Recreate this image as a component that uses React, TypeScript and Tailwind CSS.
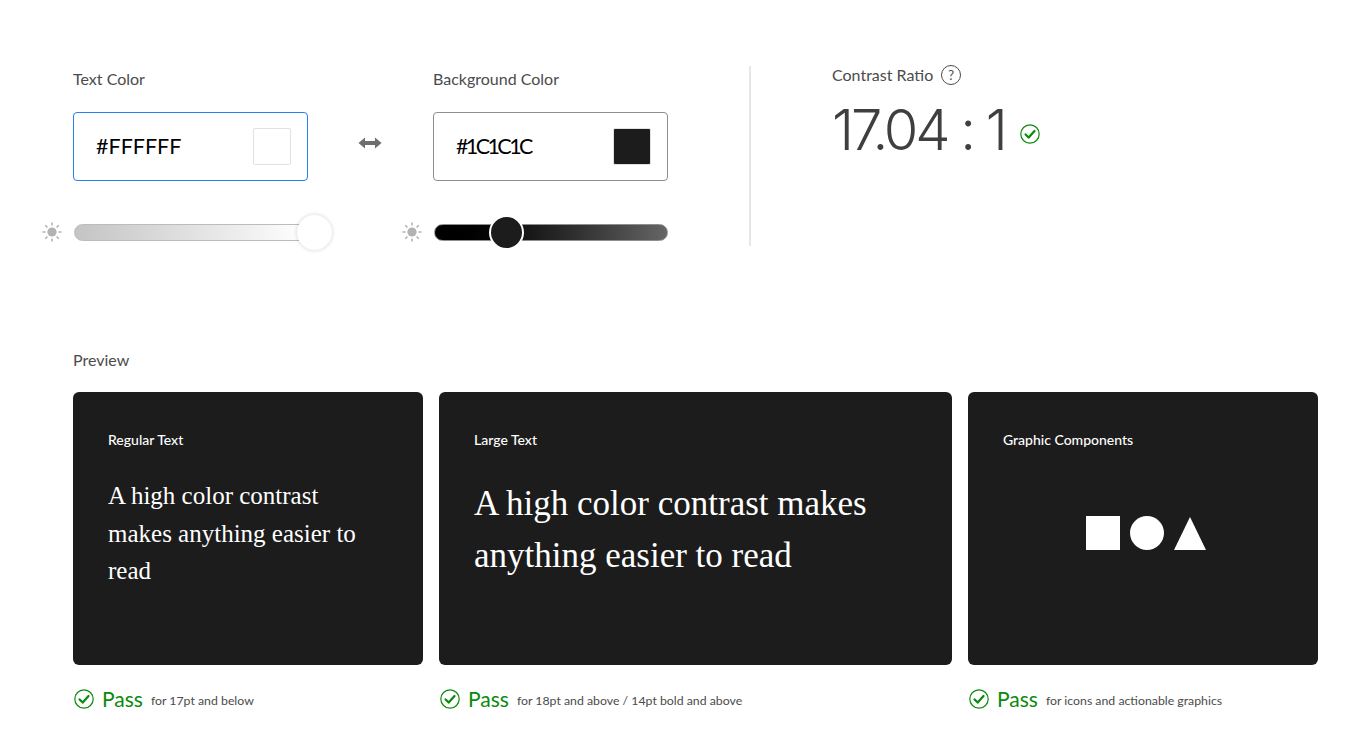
const sans = "font-['Lato','Noto_Sans',sans-serif]";

function PassIcon({ size }: { size: number }) {
  return (
    <svg width={size} height={size} viewBox="0 0 20 20" fill="none" className="shrink-0">
      <circle cx="10" cy="10" r="9.2" stroke="#0a8a0a" strokeWidth="1.2" />
      <path d="M5.600 10.400l3.100 3.200 5.800-6.600" stroke="#0a8a0a" strokeWidth="2.200" strokeLinecap="round" strokeLinejoin="round" />
    </svg>
  );
}

function SunIcon() {
  return (
    <svg width="20" height="20" viewBox="0 0 20 20" fill="#b3b3b3" className="shrink-0">
      <circle cx="10" cy="10" r="4.600" />
      <g stroke="#b3b3b3" strokeWidth="1.600">
        <path d="M10 0.500v3M10 16.500v3M0.500 10h3M16.500 10h3M3.300 3.300l2.100 2.100M14.600 14.600l2.100 2.100M16.700 3.300l-2.100 2.100M5.400 14.600l-2.100 2.100" />
      </g>
    </svg>
  );
}

function ColorField({ label, value, swatch, focused, spacing }: { label: string; value: string; swatch: string; focused?: boolean; spacing: string }) {
  return (
    <div className="w-[235px]">
      <div className="h-[26px] text-[16px] leading-[26px] text-[#4b4b4b]">{label}</div>
      <div className={`mt-[20px] flex h-[69px] items-center justify-between rounded-[4px] border bg-white pl-[22px] pr-[16px] ${focused ? 'border-[#2680eb]' : 'border-[#8e8e8e]'}`}>
        <span className={`text-[21.5px] text-black ${spacing}`}>{value}</span>
        <span className={`h-[37px] w-[38px] rounded-[2px] border border-[#e1e1e1] ${swatch}`} />
      </div>
    </div>
  );
}

function Slider({ track, thumb }: { track: string; thumb: string }) {
  return (
    <div className="-ml-[31px] mt-[41px] flex w-[266px] items-center gap-[12px]">
      <SunIcon />
      <div className={`relative h-[17px] w-[234px] rounded-full border ${track}`}>
        <span className={`absolute rounded-full ${thumb}`} />
      </div>
    </div>
  );
}

function PreviewCard({ title, width, children }: { title: string; width: string; children: React.ReactNode }) {
  return (
    <div className={`h-[273px] rounded-[6px] bg-[#1c1c1c] px-[35px] pt-[38px] ${width}`}>
      <div className="text-[14px] leading-[20px] font-medium text-white">{title}</div>
      {children}
    </div>
  );
}

function PassRow({ note, width }: { note: string; width: string }) {
  return (
    <div className={`flex items-center pl-[1px] ${width}`}>
      <PassIcon size={20} />
      <span className="ml-[8px] text-[21px] leading-[28px] text-[#0a8a0a]">Pass</span>
      <span className="ml-[8px] mt-[4px] text-[12.3px] text-[#4b4b4b]">{note}</span>
    </div>
  );
}

export default function App() {
  return (
    <div className={`min-h-[750px] bg-white pl-[73px] pt-[66px] ${sans}`}>
      {/* Colour pickers and ratio */}
      <div className="flex h-[180px]">
        <div>
          <ColorField label="Text Color" value="#FFFFFF" swatch="bg-white" spacing="tracking-normal" focused />
          <Slider
            track="border-[#bcbcbc] bg-gradient-to-r from-[#c4c4c4] to-white"
            thumb="-top-[10px] left-[222px] h-[35px] w-[35px] bg-white shadow-[0_0_4px_rgba(0,0,0,0.18)]"
          />
        </div>
        <div className="flex w-[125px] items-start justify-center pr-[2px] pt-[69px]">
          <svg width="24" height="16" viewBox="0 0 24 16" fill="#6e6e6e">
            <path d="M0.500 8L7 2.500V6h10V2.500L23.500 8 17 13.500V10H7v3.500z" />
          </svg>
        </div>
        <div>
          <ColorField label="Background Color" value="#1C1C1C" swatch="bg-[#1c1c1c]" spacing="tracking-[-2.600px]" />
          <Slider
            track="border-[#8e8e8e] bg-gradient-to-r from-black to-[#666666]"
            thumb="-top-[10px] left-[54px] h-[35px] w-[35px] border-2 border-white bg-[#1c1c1c]"
          />
        </div>
        <div className="ml-[81px] h-[180px] w-[2px] bg-[#e6e6e6]" />
        <div className="ml-[81px]">
          <div className="-mt-[1px] flex items-center gap-[8px] text-[16px] leading-[18px] text-[#4b4b4b]">
            Contrast Ratio
            <span className="flex h-[20px] w-[20px] items-center justify-center rounded-full border border-[#4b4b4b] text-[13px]">?</span>
          </div>
          <div className="mt-[12px] flex items-center">
            <span className="font-['Inter',sans-serif] text-[56px] leading-[66px] font-light tracking-[-3px] text-[#3f3f3f]">17.04 : 1</span>
            <span className="ml-[15px] mt-[7px]"><PassIcon size={20} /></span>
          </div>
        </div>
      </div>

      {/* Preview */}
      <div className="mt-[104px] text-[16px] leading-[20px] text-[#4b4b4b]">Preview</div>
      <div className="mt-[22px] flex gap-[16px]">
        <PreviewCard title="Regular Text" width="w-[350px]">
          <p className="mt-[27px] font-['Liberation_Serif',serif] text-[25px] leading-[37.5px] text-white">
            A high color contrast makes anything easier to read
          </p>
        </PreviewCard>
        <PreviewCard title="Large Text" width="w-[513px]">
          <p className="mt-[28px] font-['Liberation_Serif',serif] text-[35px] leading-[52px] text-white">
            A high color contrast makes anything easier to read
          </p>
        </PreviewCard>
        <PreviewCard title="Graphic Components" width="w-[350px]">
          <div className="mt-[66px] flex items-end justify-center gap-[10px] pl-[6px]">
            <span className="h-[34px] w-[34px] bg-white" />
            <span className="h-[34px] w-[34px] rounded-full bg-white" />
            <svg width="32" height="33" viewBox="0 0 32 33" fill="#ffffff"><path d="M16 0l16 33H0z" /></svg>
          </div>
        </PreviewCard>
      </div>
      <div className="mt-[20px] flex gap-[16px]">
        <PassRow note="for 17pt and below" width="w-[350px]" />
        <PassRow note="for 18pt and above / 14pt bold and above" width="w-[513px]" />
        <PassRow note="for icons and actionable graphics" width="w-[350px]" />
      </div>
    </div>
  );
}
